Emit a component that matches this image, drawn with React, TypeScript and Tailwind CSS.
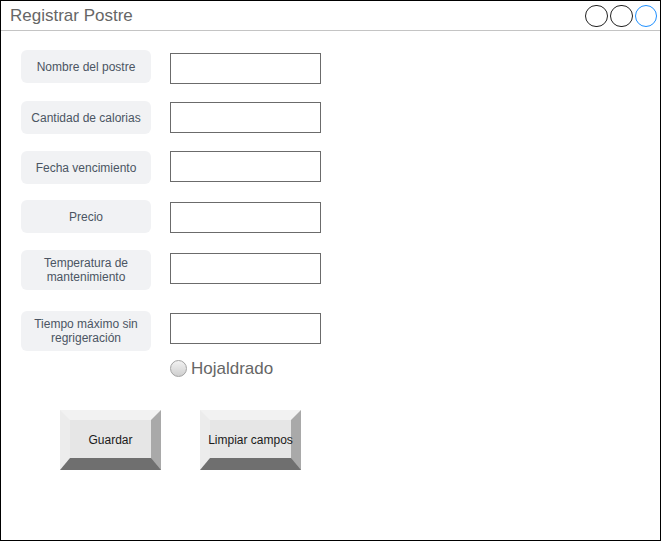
import React from 'react'

const font = { fontFamily: '"Liberation Sans", Arial, sans-serif' }

// Field row: grey label pill + white text box
function Field({ label, tall = false, rowClass, inputClass }: { label: React.ReactNode; tall?: boolean; rowClass: string; inputClass: string }) {
  return (
    <div className={`flex items-start shrink-0 ${tall ? 'h-[40px]' : 'h-[33px]'} ${rowClass}`}>
      <div
        className={`w-[130px] h-full rounded-md bg-[#f1f2f4] flex items-center justify-center text-center text-[12px] leading-[14px] text-[#4b5563]`}
      >
        {label}
      </div>
      <input type="text" className={`ml-[19px] w-[151px] h-[31px] shrink-0 border border-[#6b6b6b] bg-white outline-none ${inputClass}`} />
    </div>
  )
}

function BevelButton({ children, className = '' }: { children: React.ReactNode; className?: string }) {
  return (
    <button
      className={`w-[101px] h-[60px] box-border pt-[2px] border-solid border-t-[10px] border-l-[10px] border-r-[10px] border-b-[12px] border-t-[#f2f2f2] border-l-[#ececec] border-r-[#a9a9a9] border-b-[#6f6f6f] bg-[#e6e6e6] flex items-center justify-center text-[12px] text-[#1a1a1a] ${className}`}
    >
      <span className="whitespace-nowrap">{children}</span>
    </button>
  )
}

export default function App() {
  return (
    <div className="w-[661px] h-[541px] border border-black bg-white flex flex-col" style={font}>
      {/* Title bar */}
      <div className="h-[30px] shrink-0 border-b border-[#c4c4c4] flex items-center justify-between pl-[9px] pr-[3px]">
        <span className="text-[17px] text-[#666666]">Registrar Postre</span>
        <div className="flex items-center gap-[2px] pt-[1px]">
          <span className="w-[23px] h-[22px] rounded-full border-[1.5px] border-[#222]" />
          <span className="w-[23px] h-[22px] rounded-full border-[1.5px] border-[#222]" />
          <span className="w-[22px] h-[22px] rounded-full border-[1.5px] border-[#1e90ff]" />
        </div>
      </div>

      {/* Form */}
      <div className="flex flex-col pl-[20px]">
        <Field label="Nombre del postre" rowClass="mt-[19px]" inputClass="mt-[3px]" />
        <Field label="Cantidad de calorias" rowClass="mt-[18px]" inputClass="mt-[1px]" />
        <Field label="Fecha vencimiento" rowClass="mt-[17px]" inputClass="mt-0" />
        <Field label="Precio" rowClass="mt-[16px]" inputClass="mt-[2px]" />
        <Field label={<>Temperatura de<br />mantenimiento</>} tall rowClass="mt-[17px]" inputClass="mt-[3px]" />
        <Field label={<>Tiempo máximo sin<br />regrigeración</>} tall rowClass="mt-[21px]" inputClass="mt-[2px]" />

        <label className="ml-[149px] mt-[9px] h-[17px] flex items-center gap-[4px]">
          <span className="w-[17px] h-[17px] rounded-full border border-[#a3a3a3] bg-gradient-to-b from-[#f2f2f2] to-[#cfcfcf]" />
          <span className="text-[17px] text-[#666666] leading-[17px]">Hojaldrado</span>
        </label>

        <div className="flex mt-[33px] ml-[39px] gap-[39px]">
          <BevelButton>Guardar</BevelButton>
          <BevelButton>Limpiar campos</BevelButton>
        </div>
      </div>
    </div>
  )
}
